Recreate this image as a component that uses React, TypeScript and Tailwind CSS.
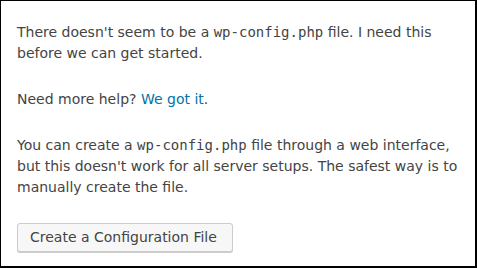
export default function App() {
  return (
    <div className="w-[477px] h-[268px] bg-white border-t border-l border-r-2 border-b-2 border-black box-border overflow-hidden">
      <div
        className="px-4 pt-[1px] text-[14px] leading-[21px] text-[#444]"
        style={{ fontFamily: '"DejaVu Sans", sans-serif' }}
      >
        <p className="mt-[20px] mb-0">
          There doesn't seem to be a{" "}
          <code className="font-['DejaVu_Sans_Mono',monospace] text-[14px]">wp-config.php</code> file. I need this
          before we can get started.
        </p>
        <p className="mt-[25px] mb-0">
          Need more help?{" "}
          <a className="text-[#0073aa]" href="#">
            We got it
          </a>
          .
        </p>
        <p className="mt-[25px] mb-0">
          You can create a{" "}
          <code className="font-['DejaVu_Sans_Mono',monospace] text-[14px]">wp-config.php</code> file through a web
          interface, but this doesn't work for all server setups. The safest way is to manually create the file.
        </p>
        <p className="mt-[25px] mb-0">
          <button className="h-[29px] pl-[12px] pr-[15px] pb-[1px] text-[14px] leading-[27px] bg-[#f7f7f7] border border-[#ccc] rounded-[3px] text-[#444] shadow-[0_1px_0_#ccc] font-['DejaVu_Sans',sans-serif]">
            Create a Configuration File
          </button>
        </p>
      </div>
    </div>
  );
}
